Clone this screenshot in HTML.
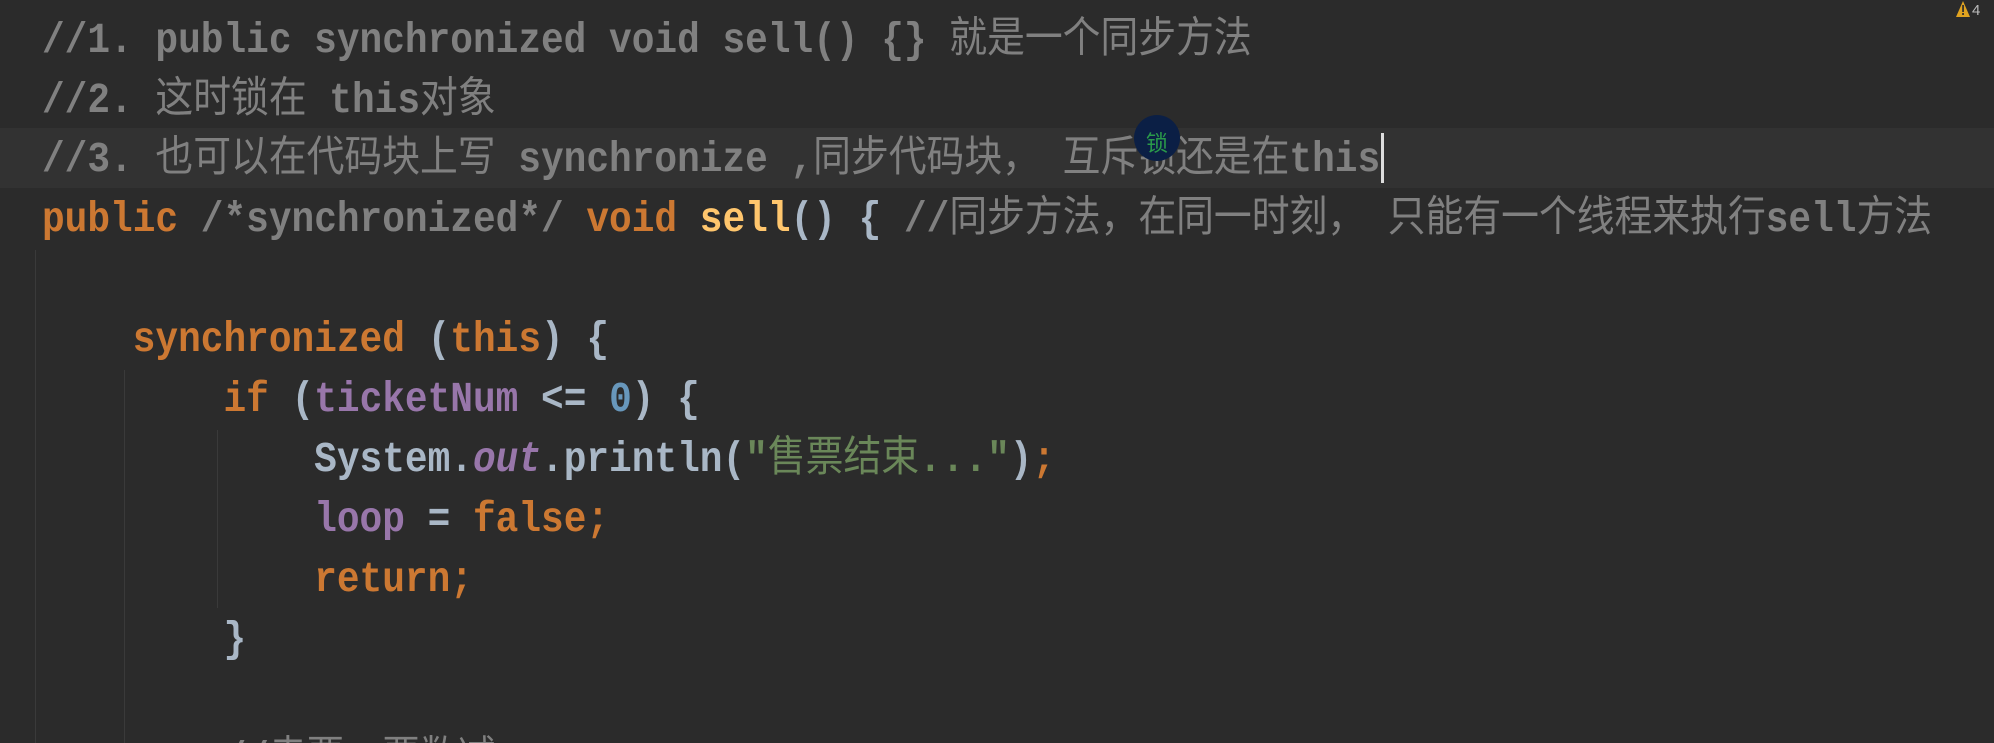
<!DOCTYPE html>
<html><head><meta charset="utf-8"><style>
html,body{margin:0;padding:0;background:#2b2b2b;width:1994px;height:743px;overflow:hidden;position:relative}
.l{position:absolute;left:42px;height:60px;line-height:60px;white-space:pre;font-family:"Liberation Mono","Noto Sans CJK SC",monospace;font-size:37.8px;font-weight:bold;color:#a9b7c6;transform:scaleY(1.12);transform-origin:0 50%}
.z{font-weight:normal}
.c{color:#808080}.k{color:#cc7832}.m{color:#ffc66d}.f{color:#9876aa}.n{color:#6897bb}.s{color:#6a8759}.i{font-style:italic}
.g{position:absolute;width:1px;background:#3a3a3a}
</style></head><body>
<div style="position:absolute;left:0;top:128px;width:1994px;height:60px;background:#323232"></div>
<div class="g" style="left:35px;top:250px;height:500px"></div>
<div class="g" style="left:124px;top:370px;height:380px"></div>
<div class="g" style="left:217px;top:430px;height:178px"></div>
<div class="l c" style="top:12px">//1. public synchronized void sell() {} <span class="z">就是一个同步方法</span></div>
<div class="l c" style="top:72px">//2. <span class="z">这时锁在</span> this<span class="z">对象</span></div>
<div class="l c" style="top:131px">//3. <span class="z">也可以在代码块上写</span> synchronize ,<span class="z">同步代码块， 互斥锁还是在</span>this</div>
<div class="l" style="top:191px"><span class="k">public </span><span class="c">/*synchronized*/ </span><span class="k">void </span><span class="m">sell</span>() { <span class="c">//<span class="z">同步方法，在同一时刻， 只能有一个线程来执行</span>sell<span class="z">方法</span></span></div>
<div class="l" style="top:311px">    <span class="k">synchronized </span>(<span class="k">this</span>) {</div>
<div class="l" style="top:371px">        <span class="k">if </span>(<span class="f">ticketNum</span> &lt;= <span class="n">0</span>) {</div>
<div class="l" style="top:431px">            System.<span class="f i">out</span>.println(<span class="s">"<span class="z">售票结束</span>..."</span>)<span class="k">;</span></div>
<div class="l" style="top:491px">            <span class="f">loop</span> = <span class="k">false;</span></div>
<div class="l" style="top:551px">            <span class="k">return;</span></div>
<div class="l" style="top:611px">        }</div>
<div class="l c" style="top:731px">        //<span class="z">卖票，票数减一</span></div>
<div style="position:absolute;left:1381px;top:133px;width:3px;height:50px;background:#ddd"></div>
<div style="position:absolute;left:1134px;top:115px;width:46px;height:46px;border-radius:50%;background:#0b1f45"></div>
<div style="position:absolute;left:1146px;top:126px;font:22px 'Noto Sans CJK SC',sans-serif;color:#2a9a4a">锁</div>
<svg style="position:absolute;left:1956px;top:0" width="38" height="18"><path d="M7 1 L14 17 L0 17 Z" fill="#e0a320"/><rect x="6.2" y="5" width="1.7" height="7" fill="#2b2b2b"/><rect x="6.2" y="13" width="1.7" height="2" fill="#2b2b2b"/><text x="16" y="15" fill="#bbb" font-family="Liberation Sans" font-size="15">4</text></svg>
</body></html>
